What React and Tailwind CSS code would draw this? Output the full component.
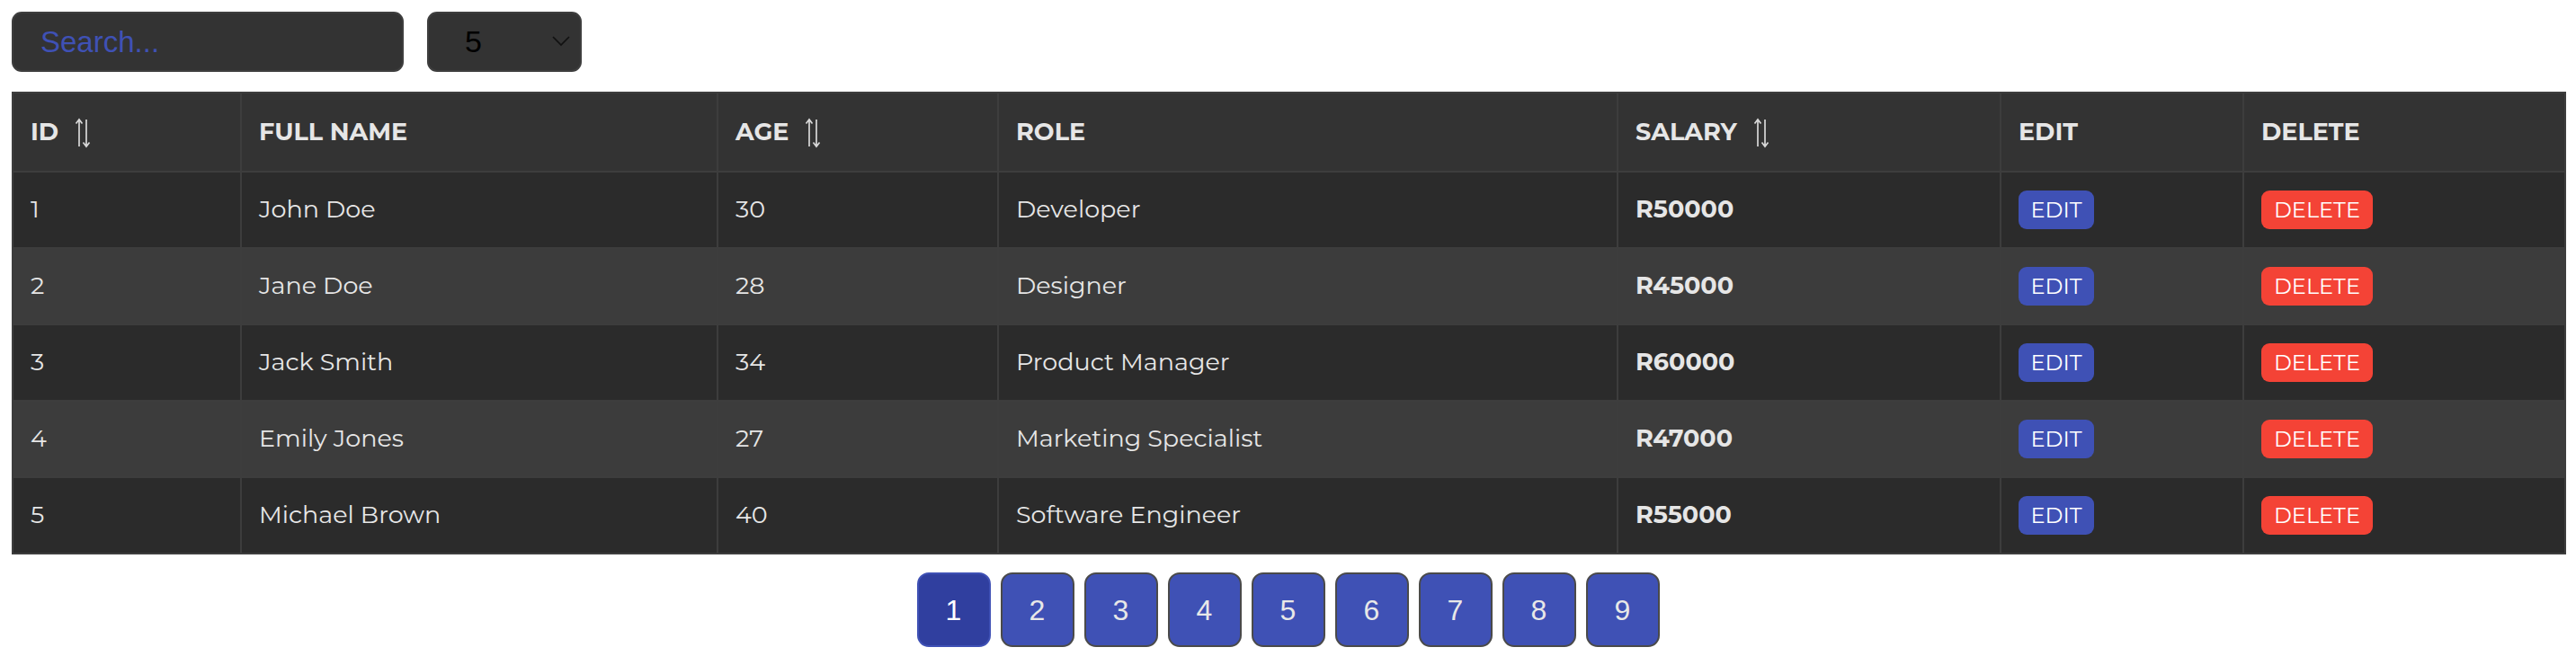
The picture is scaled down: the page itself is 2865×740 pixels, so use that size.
import { useState } from "react";

const employees = [
  { id: 1, name: "John Doe", age: 30, role: "Developer", salary: 50000 },
  { id: 2, name: "Jane Doe", age: 28, role: "Designer", salary: 45000 },
  { id: 3, name: "Jack Smith", age: 34, role: "Product Manager", salary: 60000 },
  { id: 4, name: "Emily Jones", age: 27, role: "Marketing Specialist", salary: 47000 },
  { id: 5, name: "Michael Brown", age: 40, role: "Software Engineer", salary: 55000 },
];

const font = "font-['Montserrat','Inter','Open_Sans',sans-serif]";

function SortIcon() {
  return (
    <svg width="18" height="34" viewBox="0 0 18 34" className="ml-[18px] inline-block align-middle" fill="none" stroke="#d8d8d8" strokeWidth="1.7">
      <path d="M5 32V2M1.5 6.5L5 2l3.5 4.5" />
      <path d="M13 2v30M9.5 27.5L13 32l3.5-4.5" />
    </svg>
  );
}

function Th({ children, sort, w }) {
  return (
    <th className={`${w} h-[88px] border-2 border-[#3d3d3d] px-[19px] text-left align-middle text-[27px] font-bold text-[#e6e6e6]`}>
      <span className="align-middle">{children}</span>
      {sort && <SortIcon />}
    </th>
  );
}

export default function App() {
  const [search, setSearch] = useState("");
  const [perPage, setPerPage] = useState("5");

  return (
    <div className="min-h-screen bg-white px-[13px] pt-[13px]">
      <div className="flex items-center gap-[26px]">
        <input
          value={search}
          onChange={(e) => setSearch(e.target.value)}
          placeholder="Search..."
          className="h-[67px] w-[436px] rounded-[11px] border-2 border-[#3e3e3e] bg-[#333333] px-[30px] font-['Liberation_Sans',Arial,sans-serif] text-[33px] text-white outline-none placeholder:text-[#3f51b5]"
        />
        <div className="relative">
          <select
            value={perPage}
            onChange={(e) => setPerPage(e.target.value)}
            className="h-[67px] w-[172px] appearance-none rounded-[11px] border-2 border-[#3e3e3e] bg-[#333333] pl-[40px] font-['Liberation_Sans',Arial,sans-serif] text-[34px] text-black outline-none"
          >
            <option value="5">5</option>
            <option value="10">10</option>
            <option value="20">20</option>
          </select>
          <svg width="22" height="14" viewBox="0 0 22 14" className="pointer-events-none absolute right-[12px] top-[26px]" fill="none" stroke="#111111" strokeWidth="1.7">
            <path d="M2 2l9 9 9-9" />
          </svg>
        </div>
      </div>

      <table className={`mt-[22px] w-[2839px] table-fixed border-collapse border-2 border-[#777777] ${font}`}>
        <thead className="bg-[#333333]">
          <tr>
            <Th w="w-[254px]" sort>ID</Th>
            <Th w="w-[530px]">FULL NAME</Th>
            <Th w="w-[312px]" sort>AGE</Th>
            <Th w="w-[689px]">ROLE</Th>
            <Th w="w-[426px]" sort>SALARY</Th>
            <Th w="w-[270px]">EDIT</Th>
            <Th w="w-[358px]">DELETE</Th>
          </tr>
        </thead>
        <tbody>
          {employees.map((e, i) => (
            <tr key={e.id} className={i % 2 === 0 ? "bg-[#2b2b2b]" : "bg-[#3c3c3c]"}>
              <td className="h-[85px] border-2 border-[#3d3d3d] px-[19px] text-[27px] text-[#e6e6e6]">{e.id}</td>
              <td className="border-2 border-[#3d3d3d] px-[19px] text-[27px] text-[#e6e6e6]">{e.name}</td>
              <td className="border-2 border-[#3d3d3d] px-[19px] text-[27px] text-[#e6e6e6]">{e.age}</td>
              <td className="border-2 border-[#3d3d3d] px-[19px] text-[27px] text-[#e6e6e6]">{e.role}</td>
              <td className="border-2 border-[#3d3d3d] px-[19px] text-[27px] font-bold text-[#e6e6e6]">R{e.salary}</td>
              <td className="border-2 border-[#3d3d3d] px-[19px]">
                <button className="flex h-[43px] w-[84px] items-center justify-center rounded-[9px] bg-[#3f51b5] text-[24px] text-white">
                  EDIT
                </button>
              </td>
              <td className="border-2 border-[#3d3d3d] px-[19px]">
                <button className="flex h-[43px] w-[124px] items-center justify-center rounded-[9px] bg-[#f44336] text-[24px] text-white">
                  DELETE
                </button>
              </td>
            </tr>
          ))}
        </tbody>
      </table>

      <div className="mt-[20px] flex justify-center gap-[11px] font-['Liberation_Sans',Arial,sans-serif]">
        {[1, 2, 3, 4, 5, 6, 7, 8, 9].map((n) => (
          <button
            key={n}
            className={
              n === 1
                ? "h-[83px] w-[82px] rounded-[13px] border-2 border-[#3f51b5] bg-[#303f9f] text-[32px] text-white"
                : "h-[83px] w-[82px] rounded-[13px] border-2 border-[#4a4a4a] bg-[#3f51b5] text-[32px] text-[#e8e8e8]"
            }
          >
            {n}
          </button>
        ))}
      </div>
    </div>
  );
}
